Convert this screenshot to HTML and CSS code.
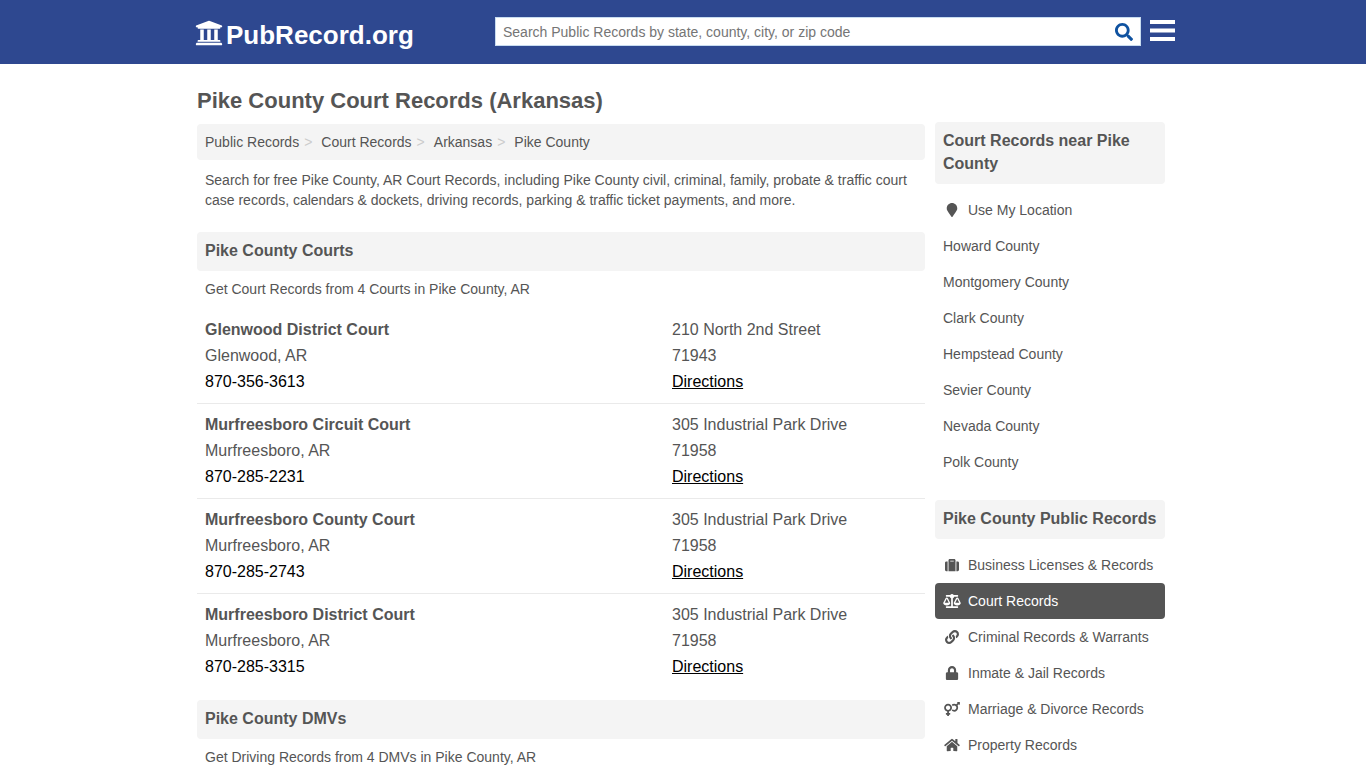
FILE: index.html
```html
<!DOCTYPE html>
<html lang="en">
<head>
<meta charset="utf-8">
<meta name="viewport" content="width=device-width, initial-scale=1">
<title>Pike County Court Records (Arkansas)</title>
<link rel="stylesheet" href="styles.css">
</head>
<body>
<header class="site-header">
  <div class="header-inner">
    <a class="logo" href="#">
      <svg class="logo-icon" viewBox="0 0 512 512" aria-hidden="true"><path d="M496 128v16a8 8 0 0 1-8 8h-24v12c0 6.627-5.373 12-12 12H60c-6.627 0-12-5.373-12-12v-12H24a8 8 0 0 1-8-8v-16a8 8 0 0 1 4.941-7.392l232-88a7.996 7.996 0 0 1 6.118 0l232 88A8 8 0 0 1 496 128zm-24 304H40c-13.255 0-24 10.745-24 24v16a8 8 0 0 0 8 8h464a8 8 0 0 0 8-8v-16c0-13.255-10.745-24-24-24zM96 192v192H60c-6.627 0-12 5.373-12 12v20h416v-20c0-6.627-5.373-12-12-12h-36V192h-64v192h-64V192h-64v192h-64V192H96z"/></svg>
      <span>PubRecord.org</span>
    </a>
    <form class="search">
      <input class="search-input" type="search" aria-label="Search public records" placeholder="Search Public Records by state, county, city, or zip code">
      <button class="search-button" type="button" aria-label="Search">
        <svg class="search-icon" viewBox="0 0 512 512" aria-hidden="true"><path d="M505 442.7L405.3 343c-4.5-4.5-10.6-7-17-7H372c27.6-35.3 44-79.7 44-128C416 93.1 322.9 0 208 0S0 93.1 0 208s93.1 208 208 208c48.3 0 92.7-16.4 128-44v16.3c0 6.4 2.5 12.5 7 17l99.7 99.7c9.4 9.4 24.6 9.4 33.9 0l28.3-28.3c9.4-9.4 9.4-24.6.1-34zM208 336c-70.7 0-128-57.2-128-128 0-70.7 57.2-128 128-128 70.7 0 128 57.2 128 128 0 70.7-57.2 128-128 128z"/></svg>
      </button>
    </form>
    <button class="menu-button" type="button" aria-label="Menu">
      <svg class="menu-icon" viewBox="0 0 25 22" aria-hidden="true"><path d="M0 0h25v4H0zM0 8.5h25v4H0zM0 17h25v4H0z"/></svg>
    </button>
  </div>
</header>

<div class="page">
  <main class="content">
    <h1 class="title">Pike County Court Records (Arkansas)</h1>
    <nav aria-label="Breadcrumb">
      <ol class="breadcrumb">
        <li><a href="#">Public Records</a></li>
        <li><a href="#">Court Records</a></li>
        <li><a href="#">Arkansas</a></li>
        <li><a href="#">Pike County</a></li>
      </ol>
    </nav>
    <p class="intro">Search for free Pike County, AR Court Records, including Pike County civil, criminal, family, probate &amp; traffic court case records, calendars &amp; dockets, driving records, parking &amp; traffic ticket payments, and more.</p>

    <section class="section">
      <h2 class="bar">Pike County Courts</h2>
      <p class="note">Get Court Records from 4 Courts in Pike County, AR</p>
      <table class="courts">
        <tbody>
          <tr>
            <td><strong>Glenwood District Court</strong><br>Glenwood, AR<br><a class="phone" href="tel:870-356-3613">870-356-3613</a></td>
            <td class="address">210 North 2nd Street<br>71943<br><a class="directions" href="#">Directions</a></td>
          </tr>
          <tr>
            <td><strong>Murfreesboro Circuit Court</strong><br>Murfreesboro, AR<br><a class="phone" href="tel:870-285-2231">870-285-2231</a></td>
            <td class="address">305 Industrial Park Drive<br>71958<br><a class="directions" href="#">Directions</a></td>
          </tr>
          <tr>
            <td><strong>Murfreesboro County Court</strong><br>Murfreesboro, AR<br><a class="phone" href="tel:870-285-2743">870-285-2743</a></td>
            <td class="address">305 Industrial Park Drive<br>71958<br><a class="directions" href="#">Directions</a></td>
          </tr>
          <tr>
            <td><strong>Murfreesboro District Court</strong><br>Murfreesboro, AR<br><a class="phone" href="tel:870-285-3315">870-285-3315</a></td>
            <td class="address">305 Industrial Park Drive<br>71958<br><a class="directions" href="#">Directions</a></td>
          </tr>
        </tbody>
      </table>
    </section>

    <section class="section">
      <h2 class="bar">Pike County DMVs</h2>
      <p class="note">Get Driving Records from 4 DMVs in Pike County, AR</p>
    </section>
  </main>

  <aside class="sidebar">
    <nav class="side-group">
      <h2 class="bar">Court Records near Pike County</h2>
      <ul class="links">
        <li><a href="#"><svg class="icon" viewBox="-96 0 576 512" aria-hidden="true"><path d="M172.268 501.67C26.97 291.031 0 269.413 0 192 0 85.961 85.961 0 192 0s192 85.961 192 192c0 77.413-26.97 99.031-172.268 309.67-9.535 13.774-29.93 13.773-39.464 0z"/></svg>Use My Location</a></li>
        <li><a href="#">Howard County</a></li>
        <li><a href="#">Montgomery County</a></li>
        <li><a href="#">Clark County</a></li>
        <li><a href="#">Hempstead County</a></li>
        <li><a href="#">Sevier County</a></li>
        <li><a href="#">Nevada County</a></li>
        <li><a href="#">Polk County</a></li>
      </ul>
    </nav>
    <nav class="side-group">
      <h2 class="bar">Pike County Public Records</h2>
      <ul class="links">
        <li><a href="#"><svg class="icon" viewBox="0 0 512 512" aria-hidden="true"><path d="M128 480h256V80c0-26.5-21.5-48-48-48H176c-26.5 0-48 21.5-48 48v400zm64-384h128v32H192V96zm320 80v256c0 26.5-21.5 48-48 48h-48V128h48c26.5 0 48 21.5 48 48zM96 480H48c-26.5 0-48-21.5-48-48V176c0-26.5 21.5-48 48-48h48v352z"/></svg>Business Licenses &amp; Records</a></li>
        <li><a class="active" href="#" aria-current="page"><svg class="icon" viewBox="0 0 640 512" aria-hidden="true"><path d="M256 336h-.02c0-16.18 1.34-8.73-85.05-181.51-17.65-35.29-68.19-35.36-85.87 0C-2.06 328.75.02 320.33.02 336H0c0 44.18 57.31 80 128 80s128-35.82 128-80zM128 176l72 144H56l72-144zm511.98 160c0-16.18 1.34-8.73-85.05-181.51-17.65-35.29-68.19-35.36-85.87 0-87.12 174.26-85.04 165.84-85.04 181.51H384c0 44.18 57.31 80 128 80s128-35.82 128-80h-.02zM440 320l72-144 72 144H440zm88 128H352V153.25c23.51-10.29 41.16-31.48 46.39-57.25H528c8.84 0 16-7.16 16-16V48c0-8.84-7.16-16-16-16H383.64C369.04 12.68 346.09 0 320 0s-49.04 12.68-63.64 32H112c-8.84 0-16 7.16-16 16v32c0 8.84 7.16 16 16 16h129.61c5.23 25.76 22.87 46.96 46.39 57.25V448H112c-8.84 0-16 7.16-16 16v32c0 8.84 7.16 16 16 16h416c8.84 0 16-7.16 16-16v-32c0-8.84-7.16-16-16-16z"/></svg>Court Records</a></li>
        <li><a href="#"><svg class="icon" viewBox="0 0 512 512" aria-hidden="true"><path d="M326.612 185.391c59.747 59.809 58.927 155.698.36 214.59-.11.12-.24.25-.36.37l-67.2 67.2c-59.27 59.27-155.699 59.262-214.96 0-59.27-59.26-59.27-155.7 0-214.96l37.106-37.106c9.84-9.84 26.786-3.3 27.294 10.606.648 17.722 3.826 35.527 9.69 52.721 1.986 5.822.567 12.262-3.783 16.612l-13.087 13.087c-28.026 28.026-28.905 73.66-1.155 101.96 28.024 28.579 74.086 28.749 102.325.51l67.2-67.19c28.191-28.191 28.073-73.757 0-101.83-3.701-3.694-7.429-6.564-10.341-8.569a16.037 16.037 0 0 1-6.947-12.606c-.396-10.567 3.348-21.456 11.698-29.806l21.054-21.055c5.521-5.521 14.182-6.199 20.584-1.731a152.482 152.482 0 0 1 20.522 17.197zM467.547 44.449c-59.261-59.262-155.69-59.27-214.96 0l-67.2 67.2c-.12.12-.25.25-.36.37-58.566 58.892-59.387 154.781.36 214.59a152.454 152.454 0 0 0 20.521 17.196c6.402 4.468 15.064 3.789 20.584-1.731l21.054-21.055c8.35-8.35 12.094-19.239 11.698-29.806a16.037 16.037 0 0 0-6.947-12.606c-2.912-2.005-6.64-4.875-10.341-8.569-28.073-28.073-28.191-73.639 0-101.83l67.2-67.19c28.239-28.239 74.3-28.069 102.325.51 27.75 28.3 26.872 73.934-1.155 101.96l-13.087 13.087c-4.35 4.35-5.769 10.79-3.783 16.612 5.864 17.194 9.042 34.999 9.69 52.721.509 13.906 17.454 20.446 27.294 10.606l37.106-37.106c59.271-59.259 59.271-155.699.001-214.959z"/></svg>Criminal Records &amp; Warrants</a></li>
        <li><a href="#"><svg class="icon" viewBox="0 0 448 512" aria-hidden="true"><path d="M400 224h-24v-72C376 68.2 307.8 0 224 0S72 68.2 72 152v72H48c-26.5 0-48 21.5-48 48v192c0 26.5 21.5 48 48 48h352c26.5 0 48-21.5 48-48V272c0-26.5-21.5-48-48-48zm-104 0H152v-72c0-39.7 32.3-72 72-72s72 32.3 72 72v72z"/></svg>Inmate &amp; Jail Records</a></li>
        <li><a href="#"><svg class="icon" viewBox="0 0 576 512" aria-hidden="true"><path d="M564 0h-79c-10.7 0-16 12.9-8.5 20.5l16.9 16.9-48.7 48.7C422.5 72.1 396.2 64 368 64c-33.7 0-64.6 11.6-89.2 30.9 14 16.7 25 36 32.1 57.1 14.5-14.8 34.7-24 57.1-24 44.1 0 80 35.9 80 80s-35.9 80-80 80c-22.3 0-42.6-9.2-57.1-24-7.1 21.1-18 40.4-32.1 57.1 24.5 19.4 55.5 30.9 89.2 30.9 79.5 0 144-64.5 144-144 0-28.2-8.1-54.5-22.1-76.7l48.7-48.7 16.9 16.9c2.4 2.4 5.4 3.5 8.4 3.5 6.2 0 12.1-4.8 12.1-12V12c0-6.6-5.4-12-12-12zM144 64C64.5 64 0 128.5 0 208c0 68.5 47.9 125.9 112 140.4V400H76c-6.6 0-12 5.4-12 12v40c0 6.6 5.4 12 12 12h36v36c0 6.6 5.4 12 12 12h40c6.6 0 12-5.4 12-12v-36h36c6.6 0 12-5.4 12-12v-40c0-6.6-5.4-12-12-12h-36v-51.6c64.1-14.6 112-71.9 112-140.4 0-79.5-64.5-144-144-144zm0 224c-44.1 0-80-35.9-80-80s35.9-80 80-80 80 35.9 80 80-35.9 80-80 80z"/></svg>Marriage &amp; Divorce Records</a></li>
        <li><a href="#"><svg class="icon" viewBox="0 0 576 512" aria-hidden="true"><path d="M280.37 148.26L96 300.11V464a16 16 0 0 0 16 16l112.06-.29a16 16 0 0 0 15.92-16V368a16 16 0 0 1 16-16h64a16 16 0 0 1 16 16v95.64a16 16 0 0 0 16 16.05L464 480a16 16 0 0 0 16-16V300L295.67 148.26a12.19 12.19 0 0 0-15.3 0zM571.6 251.47L488 182.56V44.05a12 12 0 0 0-12-12h-56a12 12 0 0 0-12 12v72.61L318.47 43a48 48 0 0 0-61 0L4.34 251.47a12 12 0 0 0-1.6 16.9l25.5 31A12 12 0 0 0 45.15 301l235.22-193.74a12.19 12.19 0 0 1 15.3 0L530.9 301a12 12 0 0 0 16.9-1.6l25.5-31a12 12 0 0 0-1.7-16.93z"/></svg>Property Records</a></li>
      </ul>
    </nav>
  </aside>
</div>
</body>
</html>
```
FILE: styles.css
```css
* {
  box-sizing: border-box;
}

body {
  margin: 0;
  background: #fff;
  color: #555;
  font: 14px/20px "Liberation Sans", Arial, sans-serif;
}

a {
  color: inherit;
  text-decoration: none;
}

svg {
  display: block;
  flex: none;
  fill: currentColor;
}

button {
  border: 0;
  padding: 0;
  background: none;
  cursor: pointer;
}

.site-header {
  background: #2e4890;
  color: #fff;
}

.header-inner {
  display: flex;
  align-items: center;
  max-width: 984px;
  height: 64px;
  margin: 0 auto;
  padding: 0 0 2px 4px;
}

.logo {
  display: flex;
  align-items: flex-start;
  gap: 3px;
  width: 300px;
  padding-top: 8px;
  font-size: 26px;
  line-height: 32px;
  font-weight: bold;
}

.logo-icon {
  width: 28px;
  height: 28px;
}

.search {
  display: flex;
  flex: 1;
  height: 29px;
  margin-right: 9px;
  padding-top: 2px;
  border: 1px solid #c8dcf0;
  background: #fff;
}

.search-input {
  flex: 1;
  min-width: 0;
  border: 0;
  padding: 0 7px;
  background: none;
  color: #555;
  font: inherit;
  outline: 0;
}

.search-input::placeholder {
  color: #757575;
}

.search-button {
  padding: 0 7px;
  color: #0f52a0;
}

.search-icon {
  width: 18px;
  height: 18px;
}

.menu-button {
  color: #fff;
}

.menu-icon {
  width: 25px;
  height: 22px;
}

.page {
  display: flex;
  gap: 10px;
  max-width: 980px;
  margin: 0 auto;
  padding: 0 8px 0 4px;
}

.content {
  flex: 1;
  min-width: 0;
}

.sidebar {
  width: 230px;
  padding-top: 58px;
}

.title {
  margin: 0;
  padding: 23px 0 9px;
  font-size: 22px;
  line-height: 28px;
}

.breadcrumb {
  display: flex;
  margin: 0;
  padding: 8px;
  border-radius: 4px;
  background: #f4f4f4;
  list-style: none;
}

.breadcrumb li + li::before {
  content: ">";
  padding: 0 9px 0 5px;
  color: #ccc;
}

.intro {
  margin: 0;
  padding: 10px 8px 22px;
}

.section {
  margin-bottom: 12px;
}

.bar {
  margin: 0;
  padding: 7px 8px 9px;
  border-radius: 4px;
  background: #f4f4f4;
  font-size: 16px;
  line-height: 23px;
}

.note {
  margin: 0;
  padding: 8px 8px 9px;
}

.courts {
  width: 100%;
  border-collapse: separate;
  border-spacing: 0;
  font-size: 16px;
  line-height: 26px;
}

.courts td {
  padding: 8px;
  border-top: 1px solid #eaeaea;
  vertical-align: top;
}

.courts tr:first-child td {
  border-top-color: transparent;
}

.courts .address {
  width: 261px;
}

.phone,
.directions {
  color: #000;
}

.directions {
  text-decoration: underline;
}

.side-group {
  margin-bottom: 20px;
}

.side-group:last-child {
  margin-bottom: 0;
}

.links {
  margin: 8px 0 0;
  padding: 0;
  list-style: none;
}

.links a {
  display: flex;
  align-items: center;
  gap: 7px;
  padding: 8px;
  border-radius: 4px;
}

.links .active {
  background: #555;
  color: #fff;
}

.icon {
  width: 18px;
  height: 14px;
}
```
